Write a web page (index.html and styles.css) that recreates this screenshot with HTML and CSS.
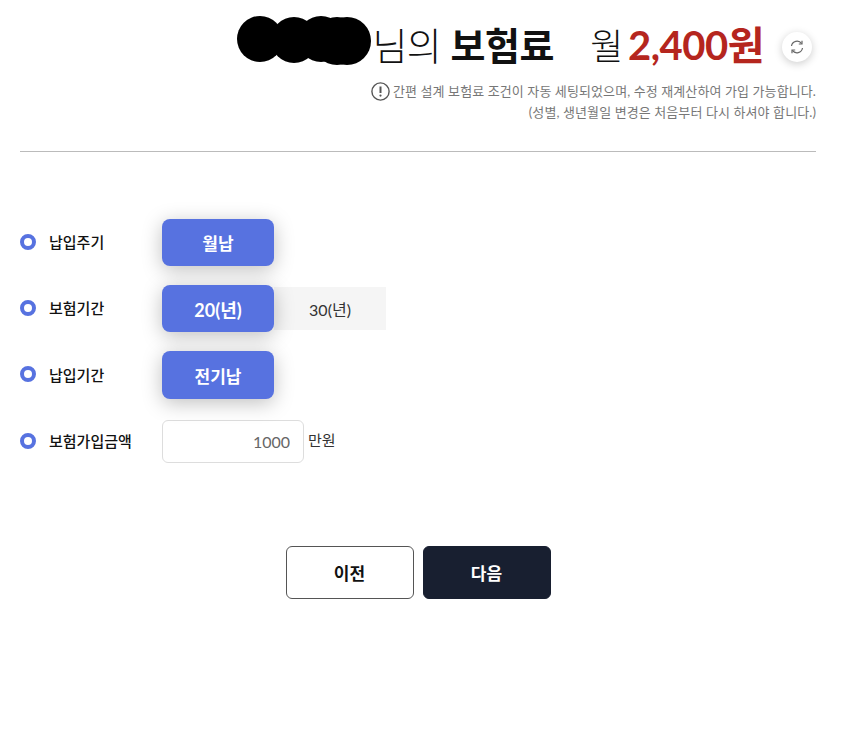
FILE: index.html
```html
<!DOCTYPE html>
<html lang="ko">
<head>
    <meta charset="UTF-8">
    <title>보험료 계산</title>
    <link rel="stylesheet" href="styles.css">
</head>
<body>
    <div class="page">
        <div class="summary">
            <svg class="mask" width="134" height="50" viewBox="0 0 134 50">
                <circle cx="23" cy="23" r="23"></circle>
                <circle cx="57" cy="24" r="23"></circle>
                <circle cx="84" cy="23" r="23"></circle>
                <circle cx="100" cy="25" r="24"></circle>
                <circle cx="110" cy="25" r="24"></circle>
            </svg>
            <h1 class="title">
                <span class="title-light">님의</span> <b class="title-bold">보험료</b>
                <span class="month">월</span>
                <b class="price">2,400원</b>
            </h1>
            <button type="button" class="refresh-btn">
                <svg width="14" height="14" viewBox="0 0 14 14" fill="none" stroke="#666" stroke-width="1.2">
                    <path d="M1.5 6A5.6 5.6 0 0 1 11.6 3.6"></path>
                    <path d="M12.5 8A5.6 5.6 0 0 1 2.4 10.4"></path>
                    <path d="M12 0.8V4H8.8"></path>
                    <path d="M2 13.2V10H5.2"></path>
                </svg>
            </button>
        </div>
        <div class="notice">
            <p class="notice-line">
                <svg class="notice-icon" width="19" height="19" viewBox="0 0 19 19" fill="none">
                    <circle cx="9.5" cy="9.5" r="8.6" stroke="#555" stroke-width="1.4"></circle>
                    <path d="M9.5 4.5V11" stroke="#555" stroke-width="2"></path>
                    <circle cx="9.5" cy="13.6" r="1.1" fill="#555"></circle>
                </svg>
                간편 설계 보험료 조건이 자동 세팅되었으며, 수정 재계산하여 가입 가능합니다.
            </p>
            <p class="notice-line">(성별, 생년월일 변경은 처음부터 다시 하셔야 합니다.)</p>
        </div>
        <div class="form">
            <div class="row">
                <div class="label"><span class="dot"></span>납입주기</div>
                <div class="options"><button type="button" class="opt on">월납</button></div>
            </div>
            <div class="row">
                <div class="label"><span class="dot"></span>보험기간</div>
                <div class="options">
                    <button type="button" class="opt on wide">20(년)</button>
                    <button type="button" class="opt">30(년)</button>
                </div>
            </div>
            <div class="row row-last">
                <div class="label"><span class="dot"></span>납입기간</div>
                <div class="options"><button type="button" class="opt on tall">전기납</button></div>
            </div>
            <div class="row">
                <div class="label"><span class="dot"></span>보험가입금액</div>
                <div class="amount">
                    <input type="text" class="amount-input" value="1000">
                    <span class="amount-unit">만원</span>
                </div>
            </div>
        </div>
        <div class="actions">
            <button type="button" class="action-btn">이전</button>
            <button type="button" class="action-btn next">다음</button>
        </div>
    </div>
</body>
</html>
```

FILE: styles.css
```css
* { box-sizing: border-box; }
body {
    margin: 0;
    background: #fff;
    color: #111;
    font-family: "Lato", "Noto Sans CJK KR", sans-serif;
}
button, input { font-family: inherit; }
.page {
    padding: 20px 40px 0 20px;
    width: 856px;
}
.summary {
    display: flex;
    align-items: center;
    justify-content: flex-end;
    height: 50px;
}
.mask {
    fill: #000;
    margin-right: 1px;
    margin-top: -8px;
}
.title {
    margin: 0;
    font-size: 38px;
    font-weight: 400;
    line-height: 50px;
    white-space: nowrap;
    color: #111;
    letter-spacing: -0.5px;
}
.title-light { font-weight: 300; }
.title-bold { font-weight: 700; }
.month {
    font-size: 36px;
    font-weight: 300;
    margin-left: 27px;
}
.price {
    color: #b5261e;
    font-size: 40px;
    font-weight: 700;
    margin-left: -4px;
}
.refresh-btn {
    display: flex;
    align-items: center;
    justify-content: center;
    width: 30px;
    height: 30px;
    margin: 4px 4px 0 18px;
    padding: 0;
    border: 0;
    border-radius: 50%;
    background: #fff;
    box-shadow: 0 2px 8px rgba(0,0,0,0.2);
}
.notice {
    margin-top: 11px;
    padding-bottom: 28px;
    border-bottom: 1px solid #bbb;
    text-align: right;
    font-size: 13px;
    letter-spacing: 0.1px;
    line-height: 21px;
    color: #777;
}
.notice-line {
    margin: 0;
}
.notice-icon {
    vertical-align: middle;
    margin-top: -2px;
}
.form {
    display: flex;
    flex-direction: column;
    margin-top: 67px;
}
.row {
    display: flex;
    align-items: center;
    margin-bottom: 19px;
}
.row-last { margin-bottom: 21px; }
.label {
    display: flex;
    align-items: center;
    width: 142px;
    padding-bottom: 2px;
    font-size: 15px;
    font-weight: 500;
    color: #111;
}
.dot {
    width: 16px;
    height: 16px;
    margin-right: 13px;
    border: 4px solid #5772e0;
    border-radius: 50%;
    background: #fff;
}
.options {
    display: flex;
    align-items: center;
}
.opt {
    width: 112px;
    height: 43px;
    border: 0;
    background: #f5f5f5;
    color: #333;
    font-size: 16px;
}
.opt.on {
    height: 47px;
    border-radius: 8px;
    background: #5772e0;
    color: #fff;
    font-size: 17px;
    font-weight: 700;
    box-shadow: 0 4px 20px rgba(0,0,0,0.25);
    position: relative;
}
.opt.wide { font-size: 18px; }
.opt.tall { height: 48px; }
.amount {
    display: flex;
    align-items: center;
}
.amount-input {
    width: 142px;
    height: 43px;
    padding: 0 13px;
    border: 1px solid #ddd;
    border-radius: 6px;
    text-align: right;
    font-size: 16px;
    color: #666;
}
.amount-unit {
    margin-left: 4px;
    padding-bottom: 4px;
    font-size: 15px;
    color: #333;
}
.actions {
    display: flex;
    justify-content: center;
    gap: 9px;
    margin-top: 64px;
}
.action-btn {
    width: 128px;
    height: 53px;
    border: 1px solid #555;
    border-radius: 6px;
    background: #fff;
    color: #111;
    font-size: 17px;
    font-weight: 700;
}
.action-btn.next {
    border-color: #181f30;
    background: #181f30;
    color: #fff;
}
```
